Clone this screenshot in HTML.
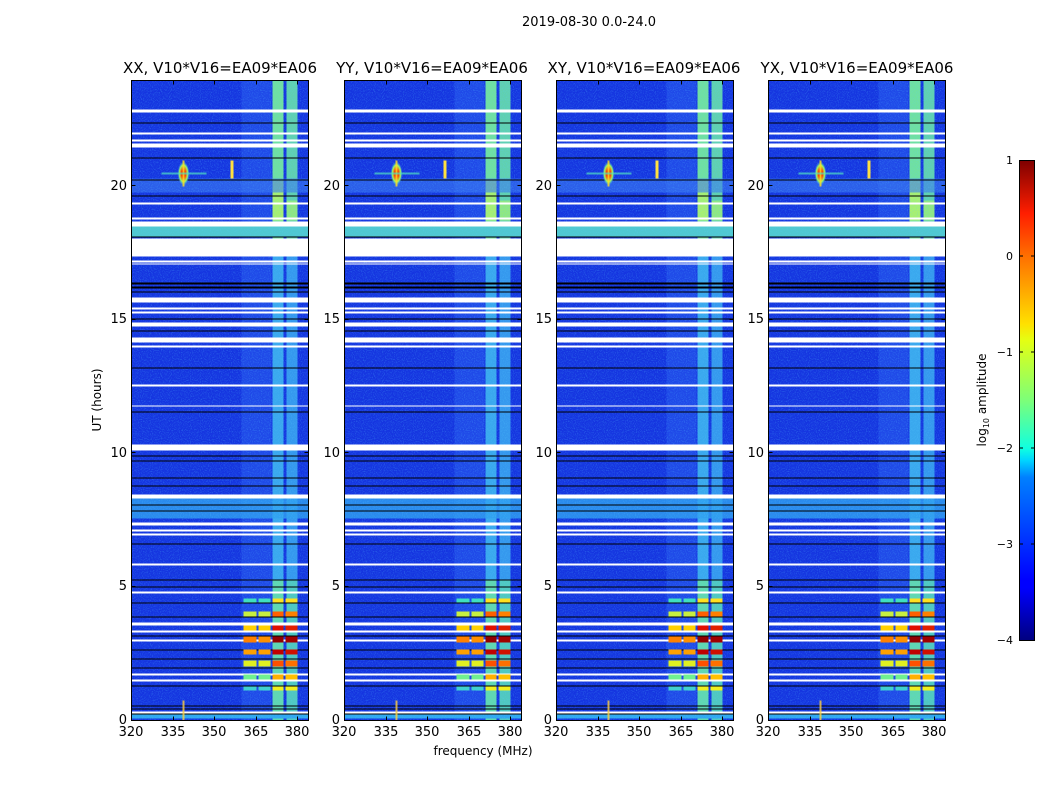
<!DOCTYPE html>
<html><head><meta charset="utf-8"><style>
html,body{margin:0;padding:0;background:#fff;width:1050px;height:800px;overflow:hidden}
text{font-family:"DejaVu Sans","Liberation Sans",sans-serif;fill:#000}
</style></head><body>
<svg width="1050" height="800" viewBox="0 0 1050 800" xmlns="http://www.w3.org/2000/svg">
<defs>
<filter id="nz" x="0" y="0" width="100%" height="100%">
<feTurbulence type="fractalNoise" baseFrequency="0.9" numOctaves="1" seed="3" result="t"/>
<feColorMatrix in="t" type="matrix" values="0 0 0 0 0.1  0 0 0 0 0.6  0 0 0 0 1  0 0 0 1.6 -0.75"/>
</filter>
<linearGradient id="jet" x1="0" y1="1" x2="0" y2="0">
<stop offset="0" stop-color="#00007f"/><stop offset="0.11" stop-color="#0000ff"/>
<stop offset="0.125" stop-color="#0000ff"/><stop offset="0.34" stop-color="#0080ff"/>
<stop offset="0.375" stop-color="#00d4ff"/><stop offset="0.4" stop-color="#10ffe0"/>
<stop offset="0.5" stop-color="#7cff79"/><stop offset="0.625" stop-color="#e4ff13"/>
<stop offset="0.66" stop-color="#ffe000"/><stop offset="0.8" stop-color="#ff7000"/>
<stop offset="0.89" stop-color="#ff1e00"/><stop offset="1" stop-color="#7f0000"/>
</linearGradient>
<radialGradient id="spot"><stop offset="0" stop-color="#c00000"/><stop offset="0.35" stop-color="#ff4000"/><stop offset="0.7" stop-color="#a0ff60"/><stop offset="1" stop-color="#30a0ff" stop-opacity="0"/></radialGradient>
<g id="panel">
<rect x="0" y="0" width="177" height="640" fill="#1535e0"/>
<rect x="110" y="0" width="30" height="640" fill="#2a5ef0" opacity="0.5"/>
<rect x="141" y="0" width="11" height="640" fill="#3aa8ee"/>
<rect x="155" y="0" width="11" height="640" fill="#3598ee"/>
<rect x="141" y="0" width="11" height="160" fill="#70e0a0"/>
<rect x="155" y="0" width="11" height="160" fill="#60d0b0"/>
<rect x="141" y="500" width="11" height="140" fill="#60d8b0"/>
<rect x="155" y="500" width="11" height="140" fill="#50c8c0"/>
<rect x="141" y="100" width="11" height="40" fill="#a8f070"/>
<rect x="155" y="120" width="11" height="20" fill="#90e880"/>
<rect x="0" y="98" width="177" height="14" fill="#3a78f0" opacity="0.6"/>
<rect x="0" y="145" width="177" height="12" fill="#50c8d0"/>
<rect x="0" y="418" width="177" height="20" fill="#30a0f0" opacity="0.8"/>
<rect x="0" y="632" width="177" height="6" fill="#30a8f0"/>
<rect x="0" y="0" width="177" height="640" filter="url(#nz)" opacity="0.55"/>
<g fill="#fff">
<rect x="0" y="29" width="177" height="3"/><rect x="0" y="52" width="177" height="2"/>
<rect x="0" y="59" width="177" height="2"/><rect x="0" y="63" width="177" height="4"/>
<rect x="0" y="122" width="177" height="2"/><rect x="0" y="137" width="177" height="2"/>
<rect x="0" y="141" width="177" height="5"/><rect x="0" y="158" width="177" height="18"/>
<rect x="0" y="180" width="177" height="2"/><rect x="0" y="183" width="177" height="1"/>
<rect x="0" y="217" width="177" height="5"/><rect x="0" y="227" width="177" height="2"/>
<rect x="0" y="231" width="177" height="2"/><rect x="0" y="242" width="177" height="4"/>
<rect x="0" y="257" width="177" height="5"/><rect x="0" y="265" width="177" height="2"/>
<rect x="0" y="304" width="177" height="2"/><rect x="0" y="325" width="177" height="1"/>
<rect x="0" y="364" width="177" height="6"/><rect x="0" y="414" width="177" height="4"/>
<rect x="0" y="442" width="177" height="3"/><rect x="0" y="449" width="177" height="2"/>
<rect x="0" y="453" width="177" height="2"/><rect x="0" y="483" width="177" height="2"/>
<rect x="0" y="511" width="177" height="2"/><rect x="0" y="542" width="177" height="3"/>
<rect x="0" y="550" width="177" height="2"/><rect x="0" y="559" width="177" height="2"/>
<rect x="0" y="593" width="177" height="2"/><rect x="0" y="599" width="177" height="2"/>
<rect x="0" y="631" width="177" height="2"/>
</g>
<g fill="#000">
<rect x="0" y="42" width="177" height="1"/><rect x="0" y="77" width="177" height="1"/>
<rect x="0" y="99" width="177" height="1"/><rect x="0" y="115" width="177" height="1"/>
<rect x="0" y="156" width="177" height="1"/><rect x="0" y="202" width="177" height="2"/>
<rect x="0" y="206" width="177" height="2"/><rect x="0" y="211" width="177" height="1"/>
<rect x="0" y="238" width="177" height="1"/><rect x="0" y="250" width="177" height="1"/>
<rect x="0" y="287" width="177" height="1"/><rect x="0" y="331" width="177" height="1"/>
<rect x="0" y="375" width="177" height="1"/><rect x="0" y="380" width="177" height="1"/>
<rect x="0" y="397" width="177" height="1"/><rect x="0" y="405" width="177" height="1"/>
<rect x="0" y="424" width="177" height="1"/><rect x="0" y="430" width="177" height="1"/>
<rect x="0" y="463" width="177" height="1"/><rect x="0" y="499" width="177" height="1"/>
<rect x="0" y="506" width="177" height="1"/><rect x="0" y="522" width="177" height="1"/>
<rect x="0" y="536" width="177" height="1"/><rect x="0" y="555" width="177" height="1"/>
<rect x="0" y="569" width="177" height="1"/><rect x="0" y="578" width="177" height="1"/>
<rect x="0" y="587" width="177" height="1"/><rect x="0" y="605" width="177" height="1"/>
<rect x="0" y="625" width="177" height="1"/><rect x="0" y="628" width="177" height="1"/>
<rect x="0" y="633" width="177" height="1"/>
</g>
<g>
<rect x="112" y="518" width="13" height="4" fill="#40e0c0"/><rect x="127" y="518" width="12" height="4" fill="#40e0c0"/>
<rect x="141" y="518" width="11" height="4" fill="#ffe020"/><rect x="154" y="518" width="12" height="4" fill="#ffe020"/>
<rect x="112" y="531" width="13" height="5" fill="#c8f040"/><rect x="127" y="531" width="12" height="5" fill="#c8f040"/>
<rect x="141" y="531" width="11" height="5" fill="#ff6000"/><rect x="154" y="531" width="12" height="5" fill="#ff8000"/>
<rect x="112" y="545" width="13" height="5" fill="#ffd000"/><rect x="127" y="545" width="12" height="5" fill="#ffd000"/>
<rect x="141" y="545" width="11" height="5" fill="#e01000"/><rect x="154" y="545" width="12" height="5" fill="#e02000"/>
<rect x="112" y="556" width="13" height="6" fill="#ff8000"/><rect x="127" y="556" width="12" height="6" fill="#ff9000"/>
<rect x="141" y="556" width="11" height="6" fill="#900000"/><rect x="154" y="556" width="12" height="6" fill="#a00000"/>
<rect x="112" y="569" width="13" height="5" fill="#ffa000"/><rect x="127" y="569" width="12" height="5" fill="#ffa000"/>
<rect x="141" y="569" width="11" height="5" fill="#c00000"/><rect x="154" y="569" width="12" height="5" fill="#d01000"/>
<rect x="112" y="580" width="13" height="6" fill="#e0f020"/><rect x="127" y="580" width="12" height="6" fill="#e0f020"/>
<rect x="141" y="580" width="11" height="6" fill="#ff5000"/><rect x="154" y="580" width="12" height="6" fill="#ff7000"/>
<rect x="112" y="594" width="13" height="5" fill="#70f090"/><rect x="127" y="594" width="12" height="5" fill="#70f090"/>
<rect x="141" y="594" width="11" height="5" fill="#ffb000"/><rect x="154" y="594" width="12" height="5" fill="#ffc000"/>
<rect x="112" y="606" width="13" height="4" fill="#40d0d0"/><rect x="127" y="606" width="12" height="4" fill="#40d0d0"/>
<rect x="141" y="606" width="11" height="4" fill="#f0f020"/><rect x="154" y="606" width="12" height="4" fill="#f0f020"/>
</g>
<ellipse cx="52" cy="93" rx="6" ry="12" fill="url(#spot)"/>
<rect x="51" y="80" width="2" height="26" fill="#ffe020" opacity="0.8"/>
<rect x="30" y="92" width="45" height="2" fill="#50e0c0" opacity="0.7"/>
<rect x="99" y="80" width="3" height="18" fill="#ffe040"/>
<rect x="51" y="620" width="2" height="20" fill="#ffd040" opacity="0.8"/>
<rect x="0" y="0" width="177" height="640" fill="none" stroke="#000" stroke-width="1"/>
<g stroke="#000" stroke-width="1">
<path d="M42 640v-4M83 640v-4M125 640v-4M166 640v-4M42 0v4M83 0v4M125 0v4M166 0v4"/>
<path d="M0 506h4M0 372h4M0 239h4M0 105h4M177 506h-4M177 372h-4M177 239h-4M177 105h-4"/>
</g>
</g>
<g id="xt" font-size="13" text-anchor="middle">
<text x="0" y="736">320</text><text x="42" y="736">335</text><text x="83" y="736">350</text><text x="125" y="736">365</text><text x="166" y="736">380</text>
</g>
<g id="yt" font-size="13" text-anchor="end">
<text x="-4" y="724">0</text><text x="-4" y="590">5</text><text x="-4" y="457">10</text><text x="-4" y="323">15</text><text x="-4" y="190">20</text>
</g>
</defs>
<text x="589" y="26" font-size="13" text-anchor="middle">2019-08-30 0.0-24.0</text>
<g font-size="15" text-anchor="middle">
<text x="220" y="73">XX, V10*V16=EA09*EA06</text>
<text x="432" y="73">YY, V10*V16=EA09*EA06</text>
<text x="644" y="73">XY, V10*V16=EA09*EA06</text>
<text x="857" y="73">YX, V10*V16=EA09*EA06</text>
</g>
<use href="#panel" x="131.5" y="80.5"/>
<use href="#panel" x="344.5" y="80.5"/>
<use href="#panel" x="556.5" y="80.5"/>
<use href="#panel" x="768.5" y="80.5"/>
<use href="#xt" x="131"/><use href="#xt" x="344"/><use href="#xt" x="556"/><use href="#xt" x="768"/>
<use href="#yt" x="131"/><use href="#yt" x="344"/><use href="#yt" x="556"/><use href="#yt" x="768"/>
<text x="483" y="755" font-size="12" text-anchor="middle">frequency (MHz)</text>
<text transform="translate(101,400) rotate(-90)" font-size="12" text-anchor="middle">UT (hours)</text>
<rect x="1019.5" y="160.5" width="15" height="480" fill="url(#jet)" stroke="#000" stroke-width="1"/>
<g stroke="#000"><path d="M1019 256h4M1031 256h4M1019 352h4M1031 352h4M1019 448h4M1031 448h4M1019 544h4M1031 544h4"/></g>
<g font-size="11" text-anchor="end">
<text x="1013" y="164">1</text><text x="1013" y="260">0</text><text x="1013" y="356">−1</text>
<text x="1013" y="452">−2</text><text x="1013" y="548">−3</text><text x="1013" y="644">−4</text>
</g>
<text transform="translate(986,400) rotate(-90)" font-size="12" text-anchor="middle">log<tspan font-size="8" dy="3">10</tspan><tspan dy="-3"> amplitude</tspan></text>
</svg>
</body></html>
